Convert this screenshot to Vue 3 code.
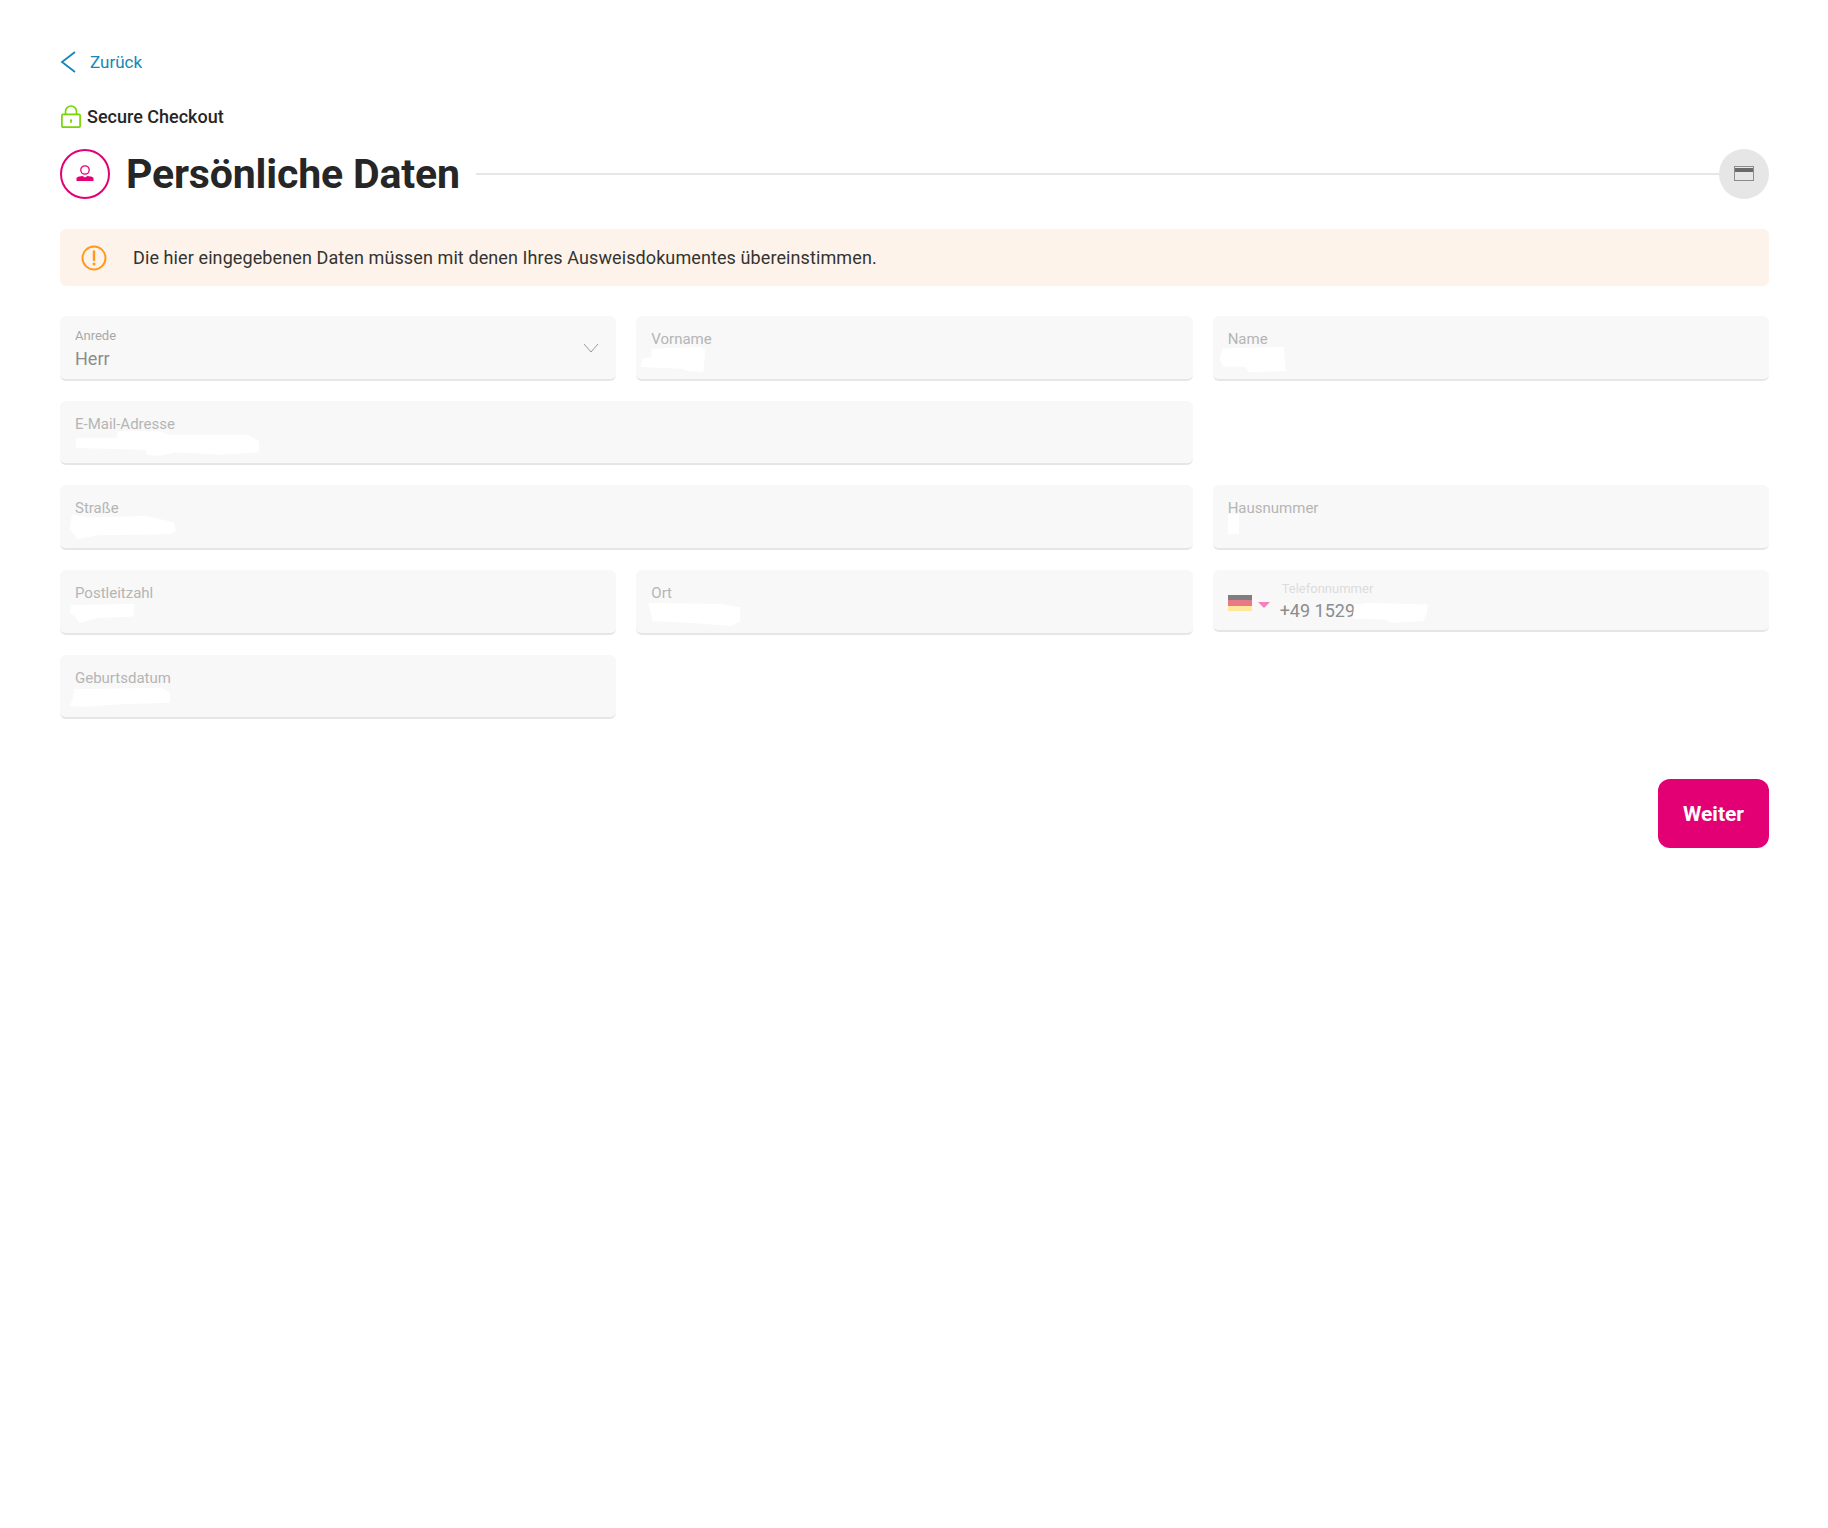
<script setup>
const rows = [
  [
    { label: 'Anrede', value: 'Herr', select: true, cls: 'col1' },
    { label: 'Vorname', cls: 'col1', blot: 'b-vorname' },
    { label: 'Name', cls: 'col1', blot: 'b-name' }
  ],
  [{ label: 'E-Mail-Adresse', cls: 'col2', blot: 'b-mail' }],
  [
    { label: 'Straße', cls: 'col2', blot: 'b-strasse' },
    { label: 'Hausnummer', cls: 'col1', blot: 'b-haus' }
  ],
  [
    { label: 'Postleitzahl', cls: 'col1', blot: 'b-plz' },
    { label: 'Ort', cls: 'col1', blot: 'b-ort' },
    { phone: true, cls: 'col1' }
  ],
  [{ label: 'Geburtsdatum', cls: 'col1', blot: 'b-geb' }]
]
</script>

<template>
  <main class="page">
    <a class="back">
      <svg width="16" height="24" viewBox="0 0 16 24" fill="none" stroke="#1487b8" stroke-width="1.8">
        <path d="M15 2 2 12l13 10" />
      </svg>
      <span>Zurück</span>
    </a>

    <div class="secure">
      <svg width="20" height="23" viewBox="0 0 20 23" fill="none" stroke="#77d600" stroke-width="1.700">
        <path d="M4.500 10V6.500a5.500 5.500 0 0 1 11 0V10" />
        <rect x=".9" y="9.400" width="18.200" height="12.700" rx="1" />
        <path d="M10 15v3" stroke-width="1.500" />
        <circle cx="10" cy="15.300" r="1.100" fill="#77d600" stroke="none" />
      </svg>
      <span>Secure Checkout</span>
    </div>

    <div class="stepper">
      <div class="step-active">
        <svg width="20" height="20" viewBox="0 0 20 20">
          <circle cx="10" cy="6" r="4.200" fill="none" stroke="#e20074" stroke-width="1.300" />
          <path d="M1.500 17v-2.500c0-1 1-1.800 3-2l3-.5 2.500 1.500 2.500-1.500 3 .5c2 .2 3 1 3 2V17z" fill="#e20074" />
        </svg>
      </div>
      <h1>Persönliche Daten</h1>
      <div class="step-line"></div>
      <div class="step-next">
        <svg width="20" height="16" viewBox="0 0 20 16">
          <rect x=".5" y=".5" width="19" height="14" fill="none" stroke="#8c8c8c" />
          <rect x="1" y="2" width="18" height="4" fill="#6a6a6a" />
        </svg>
      </div>
    </div>

    <div class="notice">
      <svg width="26" height="26" viewBox="0 0 26 26">
        <circle cx="13" cy="13" r="11.500" fill="none" stroke="#ff9a1e" stroke-width="2" />
        <path d="M13 6.500v8.500" stroke="#ff9a1e" stroke-width="2.400" stroke-linecap="round" />
        <circle cx="13" cy="19" r="1.500" fill="#ff9a1e" />
      </svg>
      <p>Die hier eingegebenen Daten müssen mit denen Ihres Ausweisdokumentes übereinstimmen.</p>
    </div>

    <form class="form">
      <template v-for="(row, r) in rows" :key="r">
        <div
          v-for="f in row"
          :key="f.label || 'phone'"
          class="field"
          :class="[f.cls, { phone: f.phone, select: f.select }]"
        >
          <template v-if="f.phone">
            <span class="flag"><i></i><i></i><i></i></span>
            <span class="caret"></span>
            <div class="phone-body">
              <label class="phone-label">Telefonnummer</label>
              <div class="phone-value">+49 1529</div>
            </div>
            <span class="blot b-phone"></span>
          </template>
          <template v-else-if="f.select">
            <label class="small-label">{{ f.label }}</label>
            <div class="value">{{ f.value }}</div>
            <svg class="chev" width="16" height="10" viewBox="0 0 16 10" fill="none" stroke="#9a9a9a" stroke-width="1">
              <path d="M1 1l7 8 7-8" />
            </svg>
          </template>
          <template v-else>
            <label>{{ f.label }}</label>
            <span class="blot" :class="f.blot"></span>
          </template>
        </div>
      </template>
    </form>

    <div class="actions">
      <button type="button" class="next">Weiter</button>
    </div>
  </main>
</template>

<style scoped>
.page {
  box-sizing: border-box;
  width: 1828px;
  height: 1528px;
  padding: 48px 59px 0 60px;
  background: #fff;
  color: #262626;
  font-family: Roboto, sans-serif;
}
.back {
  display: flex;
  align-items: center;
  gap: 14px;
  height: 28px;
  color: #1487b8;
  font-size: 17px;
}
.secure {
  display: flex;
  align-items: center;
  gap: 6px;
  margin-top: 27px;
  padding-left: 1px;
  height: 26px;
  font-size: 18px;
  font-weight: 500;
}
.stepper {
  display: flex;
  align-items: center;
  margin-top: 20px;
}
.step-active {
  box-sizing: border-box;
  width: 50px;
  height: 50px;
  border: 2px solid #e20074;
  border-radius: 50%;
  display: flex;
  align-items: center;
  justify-content: center;
}
h1 {
  margin: 0 16px;
  font-size: 41px;
  font-weight: 700;
  letter-spacing: -.15px;
  line-height: 50px;
}
.step-line {
  flex: 1;
  height: 2px;
  background: #e6e6e6;
}
.step-next {
  width: 50px;
  height: 50px;
  border-radius: 50%;
  background: #e6e6e6;
  display: flex;
  align-items: center;
  justify-content: center;
}
.notice {
  display: flex;
  align-items: center;
  height: 57px;
  margin-top: 30px;
  padding-left: 21px;
  gap: 26px;
  background: #fdf3ea;
  border-radius: 6px;
}
.notice p {
  margin: 0;
  font-size: 18px;
  letter-spacing: .1px;
  color: #333;
}
.form {
  display: grid;
  grid-template-columns: repeat(3, 1fr);
  gap: 20px;
  margin-top: 30px;
}
.field {
  position: relative;
  box-sizing: border-box;
  height: 64.670px;
  padding: 14px 15px 0;
  background: #f8f8f8;
  border-bottom: 2px solid #e6e6e6;
  border-radius: 6px;
}
.col2 { grid-column: span 2; }
.field label {
  display: block;
  font-size: 15px;
  line-height: 18px;
  color: #b5b5b5;
}
.field .small-label {
  margin-top: -2px;
  font-size: 13px;
  line-height: 16px;
  color: #a8a8a8;
}
.value {
  margin-top: 4px;
  font-size: 18px;
  line-height: 22px;
  color: #8c8c8c;
}
.chev {
  position: absolute;
  right: 17px;
  top: 27px;
}
.phone {
  height: 62.500px;
  display: flex;
  align-items: flex-start;
}
.flag {
  display: flex;
  flex-direction: column;
  width: 24px;
  height: 16px;
  margin-top: 11px;
}
.flag i {
  flex: 1;
}
.flag i:nth-child(1) { background: #7f7f7f; }
.flag i:nth-child(2) { background: #e87a88; }
.flag i:nth-child(3) { background: #ffe89a; }
.caret {
  width: 0;
  height: 0;
  margin: 18px 0 0 6px;
  border-left: 6px solid transparent;
  border-right: 6px solid transparent;
  border-top: 6px solid #f47fbd;
}
.phone-body {
  margin: -3px 0 0 10px;
}
.field .phone-label {
  margin-left: 2px;
  font-size: 13px;
  line-height: 16px;
  color: #dcdcdc;
}
.phone-value {
  margin-top: 3px;
  font-size: 18px;
  line-height: 22px;
  color: #8c8c8c;
}
.blot {
  position: absolute;
  background: #fff;
}
.b-vorname {
  left: 4px; top: 31px; width: 65px; height: 25px;
  clip-path: polygon(17% 7%, 93% 0, 100% 13%, 97% 100%, 72% 96%, 66% 87%, 0 80%, 3% 47%, 17% 40%);
}
.b-name {
  left: 7px; top: 31px; width: 66px; height: 25px;
  clip-path: polygon(5% 6%, 97% 0, 100% 97%, 45% 100%, 38% 78%, 5% 78%, 0 45%);
}
.b-mail {
  left: 16px; top: 30px; width: 183px; height: 25px;
  clip-path: polygon(0 29%, 22% 29%, 23% 0, 46% 3%, 51% 16%, 94% 16%, 100% 43%, 100% 87%, 80% 96%, 63% 89%, 54% 87%, 46% 100%, 39% 96%, 38% 76%, 0 69%);
}
.b-strasse {
  left: 10px; top: 29px; width: 106px; height: 25px;
  clip-path: polygon(3% 0, 18% 13%, 73% 7%, 98% 33%, 100% 67%, 94% 80%, 26% 84%, 7% 100%, 0 60%, 1% 20%);
}
.b-haus { left: 15px; top: 29px; width: 11px; height: 20px; }
.b-plz {
  left: 10px; top: 34px; width: 64px; height: 19px;
  clip-path: polygon(1% 5%, 100% 0, 99% 66%, 43% 74%, 15% 100%, 8% 66%, 0 48%);
}
.b-ort {
  left: 12px; top: 33px; width: 92px; height: 23px;
  clip-path: polygon(0 0, 80% 5%, 100% 20%, 100% 80%, 90% 100%, 40% 85%, 5% 80%);
}
.b-geb {
  left: 10px; top: 33px; width: 100px; height: 19px;
  clip-path: polygon(4% 9%, 92% 0, 100% 30%, 100% 79%, 50% 88%, 14% 100%, 0 96%, 3% 53%);
}
.b-phone {
  left: 140px; top: 33px; width: 75px; height: 20px;
  clip-path: polygon(2% 8%, 20% 0, 100% 8%, 99% 50%, 94% 92%, 52% 100%, 43% 83%, 0 78%);
}
.actions {
  display: flex;
  justify-content: flex-end;
  margin-top: 60px;
}
.next {
  width: 111px;
  height: 69px;
  border: 0;
  border-radius: 12px;
  background: #e20074;
  color: #fff;
  font-family: Roboto, sans-serif;
  font-size: 21px;
  font-weight: 700;
}
</style>
